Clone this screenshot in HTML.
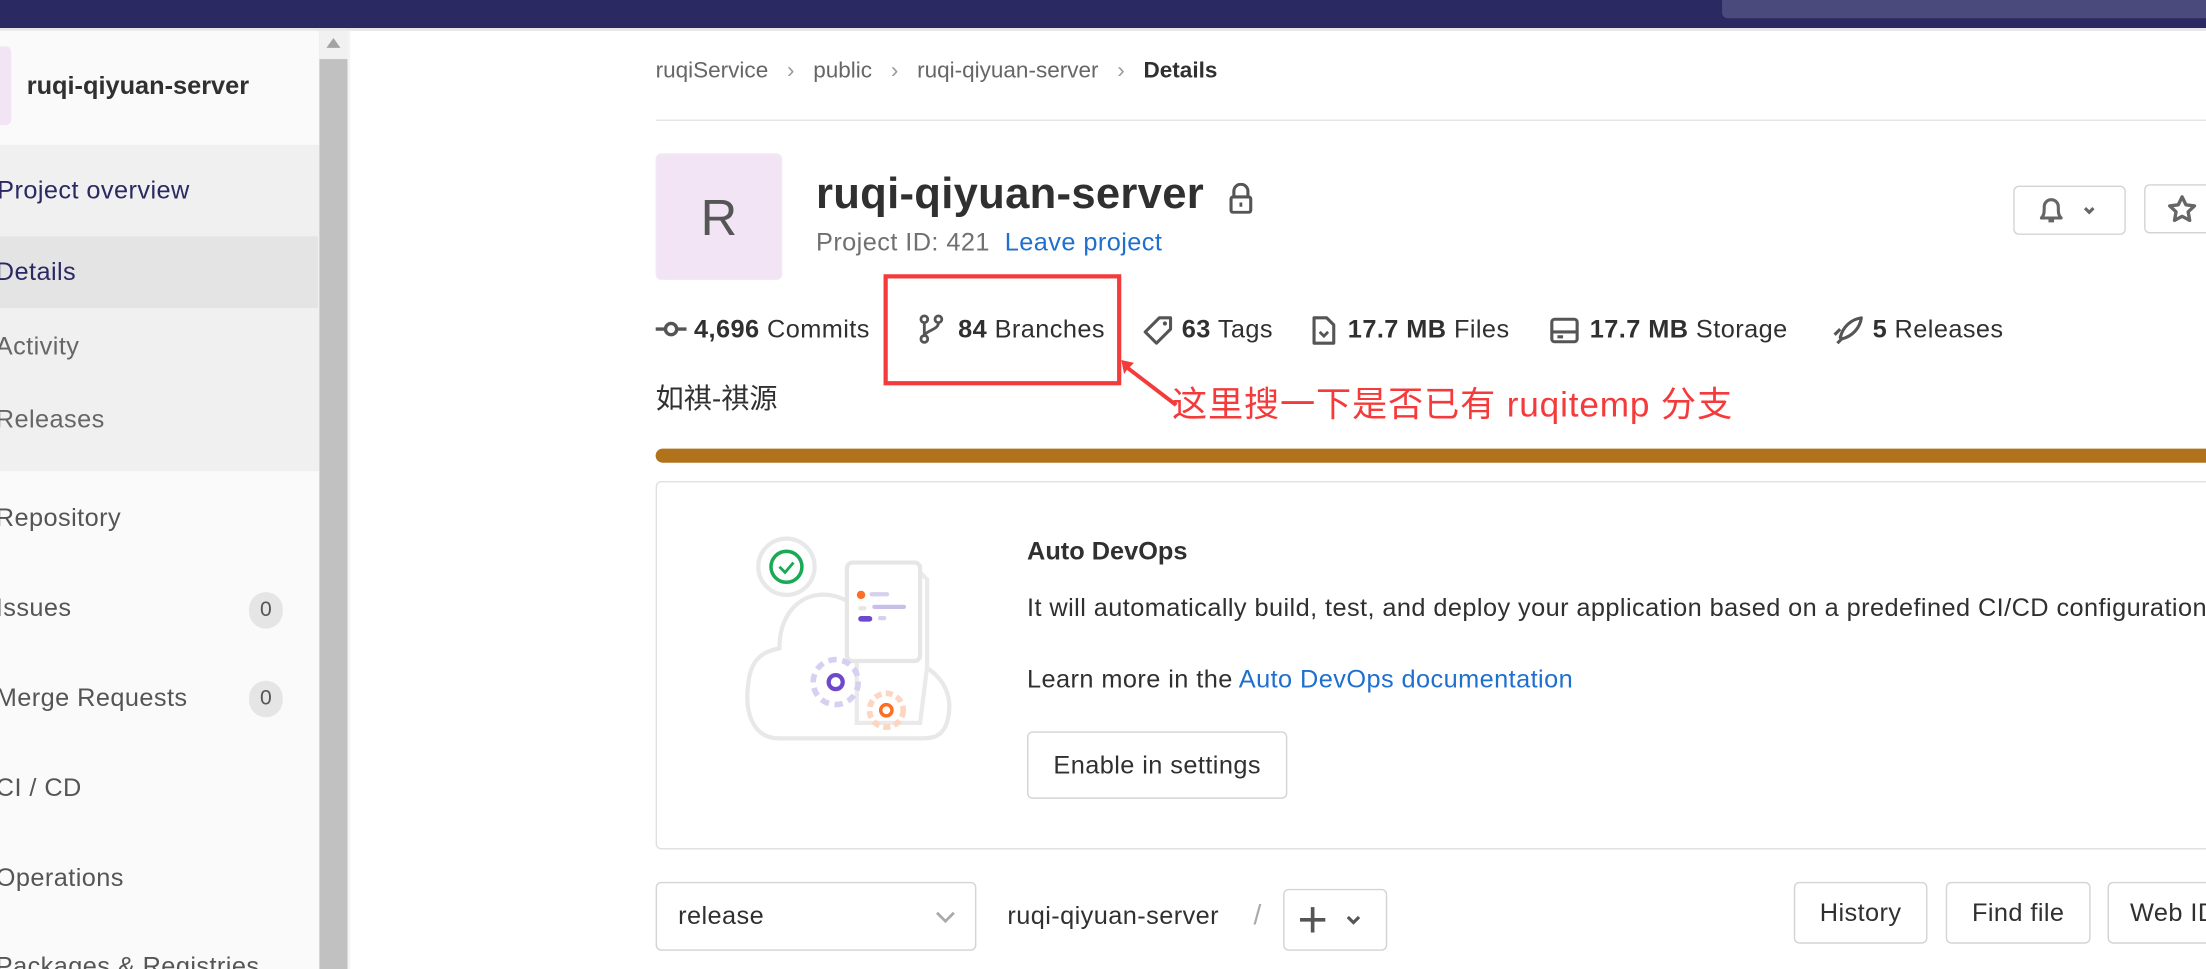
<!DOCTYPE html>
<html><head><meta charset="utf-8"><style>
html,body{margin:0;padding:0;width:2206px;height:969px;overflow:hidden;background:#fff}
#w{position:absolute;left:0;top:0;width:1568px;height:689px;transform:scale(1.4069,1.4064);transform-origin:0 0;font-family:"Liberation Sans","Noto Sans CJK SC",sans-serif;color:#303030;overflow:hidden}
.a{position:absolute;white-space:nowrap}
.btn{position:absolute;border:1px solid #d4d4d4;border-radius:4px;background:#fff;box-sizing:border-box}
.s{font-size:18px;letter-spacing:0.3px}
</style></head><body><div id="w">
<div class="a" style="left:0;top:0;width:1568px;height:20px;background:#2b2962"></div>
<div class="a" style="left:1224px;top:0;width:344px;height:13px;background:#4b4a7c;border-radius:0 0 0 4px"></div>
<div class="a" style="left:0;top:20px;width:1568px;height:2px;background:#e8e8e8"></div>
<div class="a" style="left:0;top:22px;width:227px;height:667px;background:#fafafa"></div>
<div class="a" style="left:0;top:33px;width:8px;height:56px;background:#f2e4f5;border-radius:0 4px 4px 0"></div>
<div class="a" style="left:19px;top:51px;font-size:18px;font-weight:bold;color:#303030">ruqi-qiyuan-server</div>
<div class="a" style="left:0;top:103px;width:227px;height:232px;background:#f0f0f0"></div>
<div class="a" style="left:0;top:168px;width:226px;height:51px;background:#e4e4e4"></div>
<div class="a s" style="left:-2px;top:125px;color:#2b2962">Project overview</div>
<div class="a s" style="left:-3px;top:183px;color:#2b2962">Details</div>
<div class="a s" style="left:-3px;top:236px;color:#666">Activity</div>
<div class="a s" style="left:-3px;top:288px;color:#666">Releases</div>
<div class="a s" style="left:-3px;top:358px;color:#555">Repository</div>
<div class="a s" style="left:-3px;top:422px;color:#555">Issues</div>
<div class="a s" style="left:-3px;top:486px;color:#555">Merge Requests</div>
<div class="a s" style="left:-3px;top:550px;color:#555">CI / CD</div>
<div class="a s" style="left:-3px;top:614px;color:#555">Operations</div>
<div class="a s" style="left:-3px;top:677px;color:#555">Packages &amp; Registries</div>
<div class="a" style="left:177px;top:421px;width:24px;height:26px;border-radius:13px;background:#e5e5e5;font-size:15px;color:#555;text-align:center;line-height:26px">0</div>
<div class="a" style="left:177px;top:484px;width:24px;height:26px;border-radius:13px;background:#e5e5e5;font-size:15px;color:#555;text-align:center;line-height:26px">0</div>
<div class="a" style="left:227px;top:22px;width:20px;height:667px;background:#c1c1c1"></div>
<div class="a" style="left:227px;top:22px;width:20px;height:20px;background:#f1f1f1"></div>
<div class="a" style="left:232px;top:27px;width:0;height:0;border-left:5px solid transparent;border-right:5px solid transparent;border-bottom:7px solid #a3a3a3"></div>
<div class="a" style="left:247px;top:22px;width:2px;height:667px;background:#f4f4f4"></div>
<div class="a" style="left:466px;top:42px;font-size:16px;color:#666">ruqiService&nbsp;&nbsp;&nbsp;<span style="color:#999">›</span>&nbsp;&nbsp;&nbsp;public&nbsp;&nbsp;&nbsp;<span style="color:#999">›</span>&nbsp;&nbsp;&nbsp;ruqi-qiyuan-server&nbsp;&nbsp;&nbsp;<span style="color:#999">›</span>&nbsp;&nbsp;&nbsp;<b style="color:#303030">Details</b></div>
<div class="a" style="left:466px;top:85px;width:1102px;height:1px;background:#e5e5e5"></div>
<div class="a" style="left:466px;top:109px;width:90px;height:90px;box-sizing:border-box;border:1px solid #f0e8f2;border-radius:4px;background:#f2e4f5;font-size:36px;color:#555;text-align:center;line-height:90px">R</div>
<div class="a" style="left:580px;top:120px;font-size:31px;font-weight:bold;color:#303030;letter-spacing:0.2px">ruqi-qiyuan-server</div>
<svg class="a" style="left:873px;top:130px" width="18" height="22" viewBox="0 0 18 22"><path d="M4 10V6a5 5 0 0 1 10 0v4" fill="none" stroke="#555" stroke-width="2.2"/><rect x="2" y="10" width="14" height="11" rx="1.5" fill="none" stroke="#555" stroke-width="2.2"/><rect x="8" y="14" width="2" height="3" fill="#555"/></svg>
<div class="a s" style="left:580px;top:162px;color:#707070">Project ID: 421&nbsp; <span style="color:#1f6fce">Leave project</span></div>
<div class="btn" style="left:1431px;top:132px;width:80px;height:35px"></div>
<svg class="a" style="left:1447px;top:139px" width="48" height="22" viewBox="0 0 48 22"><path d="M4 16c2-2 2-4 2-8a5 5 0 0 1 10 0c0 4 0 6 2 8z" fill="none" stroke="#666" stroke-width="2.2" stroke-linejoin="round"/><path d="M9 18h4" stroke="#666" stroke-width="2.2"/><path d="M35 9l3 3 3-3" fill="none" stroke="#666" stroke-width="2.2"/></svg>
<div class="btn" style="left:1524px;top:131px;width:60px;height:35px"></div>
<svg class="a" style="left:1540px;top:138px" width="22" height="22" viewBox="0 0 22 22"><path d="M11 2l2.7 5.6 6.1.8-4.5 4.2 1.1 6.1L11 15.8l-5.4 2.9 1.1-6.1L2.2 8.4l6.1-.8z" fill="none" stroke="#666" stroke-width="2.4" stroke-linejoin="round"/></svg>
<div class="a s" style="left:466px;top:224px;color:#303030">
<svg width="22" height="14" viewBox="0 0 22 14" style="vertical-align:-1px"><circle cx="11" cy="7" r="4" fill="none" stroke="#555" stroke-width="2.4"/><path d="M0 7h7M15 7h7" stroke="#555" stroke-width="2.4"/></svg> <b>4,696</b> Commits</div>
<svg class="a" style="left:653px;top:223px" width="18" height="22" viewBox="0 0 18 22"><circle cx="4" cy="4" r="2.4" fill="none" stroke="#555" stroke-width="2"/><circle cx="4" cy="18" r="2.4" fill="none" stroke="#555" stroke-width="2"/><circle cx="14" cy="4" r="2.4" fill="none" stroke="#555" stroke-width="2"/><path d="M4 6.5v9M14 6.5c0 5-8 5-10 9" fill="none" stroke="#555" stroke-width="2"/></svg>
<div class="a s" style="left:681px;top:224px"><b>84</b> Branches</div>
<svg class="a" style="left:812px;top:224px" width="22" height="22" viewBox="0 0 22 22"><path d="M12 2h8v8L10 20 2 12z" fill="none" stroke="#555" stroke-width="2.2" stroke-linejoin="round"/><circle cx="16" cy="6" r="1.5" fill="#555"/></svg>
<div class="a s" style="left:840px;top:224px"><b>63</b> Tags</div>
<svg class="a" style="left:931px;top:224px" width="20" height="22" viewBox="0 0 20 22"><path d="M3 2h9l5 5v13H3z" fill="none" stroke="#555" stroke-width="2.2" stroke-linejoin="round"/><path d="M7 12l3 3 3-3" fill="none" stroke="#555" stroke-width="2"/></svg>
<div class="a s" style="left:958px;top:224px"><b>17.7 MB</b> Files</div>
<svg class="a" style="left:1101px;top:224px" width="22" height="22" viewBox="0 0 22 22"><rect x="2" y="3" width="18" height="16" rx="2" fill="none" stroke="#555" stroke-width="2.2"/><path d="M2 12h18M6 15.5h4" stroke="#555" stroke-width="2.2"/></svg>
<div class="a s" style="left:1130px;top:224px"><b>17.7 MB</b> Storage</div>
<svg class="a" style="left:1302px;top:224px" width="24" height="22" viewBox="0 0 24 22"><path d="M6 16C8 8 14 3 21 2c-1 7-6 13-14 15z" fill="none" stroke="#555" stroke-width="2.2" stroke-linejoin="round"/><path d="M2 14l4-4M4 20l4-4" stroke="#555" stroke-width="2.2"/></svg>
<div class="a s" style="left:1331px;top:224px"><b>5</b> Releases</div>
<div class="a" style="left:628px;top:195px;width:169px;height:79px;box-sizing:border-box;border:3px solid #f43a3a"></div>
<svg class="a" style="left:795px;top:250px" width="50" height="40" viewBox="0 0 50 40"><path d="M2 6l9 2-3 3 34 26-2 2-34-26-2 3z" fill="#f43a3a"/></svg>
<div class="a" style="left:833px;top:268px;font-size:25px;color:#f43a3a;letter-spacing:0.6px">这里搜一下是否已有 ruqitemp 分支</div>
<div class="a" style="left:466px;top:267px;font-size:20px;color:#303030">如祺-祺源</div>
<div class="a" style="left:466px;top:319px;width:1110px;height:10px;background:#b0721b;border-radius:5px 0 0 5px"></div>
<div class="a" style="left:466px;top:342px;width:1120px;height:262px;box-sizing:border-box;border:1px solid #e0e0e0;border-radius:4px"></div>
<svg class="a" style="left:524px;top:375px" width="170" height="160" viewBox="0 0 170 160">
<path d="M30 150c-20 0-25-20-22-40 2-18 12-22 22-24 0-25 15-40 35-38 15 2 25 12 30 25 5-5 12-5 18-3 15 5 22 15 22 30 12 8 18 20 15 35-3 15-12 15-20 15z" fill="#fff" stroke="#e8e8e8" stroke-width="3"/>
<path d="M85 32h45l5 5v62l-5 40H85z" fill="#fff" stroke="#eaeaea" stroke-width="3"/>
<rect x="78" y="25" width="52" height="70" rx="4" fill="#fff" stroke="#e6e6e6" stroke-width="3"/>
<circle cx="88" cy="48" r="3" fill="#fc6d26"/><rect x="94" y="46" width="14" height="3" rx="1.5" fill="#d5d0ee"/>
<rect x="86" y="56" width="6" height="3" rx="1.5" fill="#e6e6e6"/><rect x="96" y="55" width="24" height="3" rx="1.5" fill="#c8bfe8"/>
<rect x="86" y="63" width="10" height="4" rx="2" fill="#6e49cb"/><rect x="100" y="63" width="6" height="3" rx="1.5" fill="#d5d0ee"/>
<circle cx="35" cy="28" r="20" fill="#fff" stroke="#e8e8e8" stroke-width="3"/>
<circle cx="35" cy="28" r="11" fill="none" stroke="#1aaa55" stroke-width="2.5"/><path d="M30 28l4 4 6-7" fill="none" stroke="#1aaa55" stroke-width="2"/>
<circle cx="70" cy="110" r="16" fill="none" stroke="#d8d0f0" stroke-width="4" stroke-dasharray="6 4"/><circle cx="70" cy="110" r="5" fill="none" stroke="#6e49cb" stroke-width="3"/>
<circle cx="106" cy="130" r="12" fill="none" stroke="#fdd5c0" stroke-width="4" stroke-dasharray="5 3"/><circle cx="106" cy="130" r="4" fill="none" stroke="#fc6d26" stroke-width="2.5"/>
</svg>
<div class="a" style="left:730px;top:382px;font-size:18px;font-weight:bold;color:#303030">Auto DevOps</div>
<div class="a s" style="left:730px;top:422px;color:#303030">It will automatically build, test, and deploy your application based on a predefined CI/CD configuration.</div>
<div class="a s" style="left:730px;top:473px;color:#303030">Learn more in the <span style="color:#1f6fce">Auto DevOps documentation</span></div>
<div class="btn s" style="left:730px;top:520px;width:185px;height:48px;line-height:46px;text-align:center;color:#303030">Enable in settings</div>
<div class="btn s" style="left:466px;top:627px;width:228px;height:49px;line-height:47px;padding-left:15px;color:#303030">release</div>
<svg class="a" style="left:664px;top:646px" width="16" height="12" viewBox="0 0 16 12"><path d="M2 3l6 6 6-6" fill="none" stroke="#aaa" stroke-width="2"/></svg>
<div class="a s" style="left:716px;top:641px;color:#303030">ruqi-qiyuan-server</div>
<div class="a" style="left:891px;top:640px;font-size:20px;color:#aaa">/</div>
<div class="btn" style="left:912px;top:632px;width:74px;height:44px"></div>
<svg class="a" style="left:922px;top:643px" width="52" height="22" viewBox="0 0 52 22"><path d="M11 2v18M2 11h18" stroke="#555" stroke-width="2.6"/><path d="M36 9l4 4 4-4" fill="none" stroke="#555" stroke-width="2.2"/></svg>
<div class="btn s" style="left:1275px;top:627px;width:95px;height:44px;line-height:42px;text-align:center">History</div>
<div class="btn s" style="left:1383px;top:627px;width:103px;height:44px;line-height:42px;text-align:center">Find file</div>
<div class="btn s" style="left:1498px;top:627px;width:100px;height:44px;line-height:42px;padding-left:15px">Web IDE</div>
</div></body></html>
